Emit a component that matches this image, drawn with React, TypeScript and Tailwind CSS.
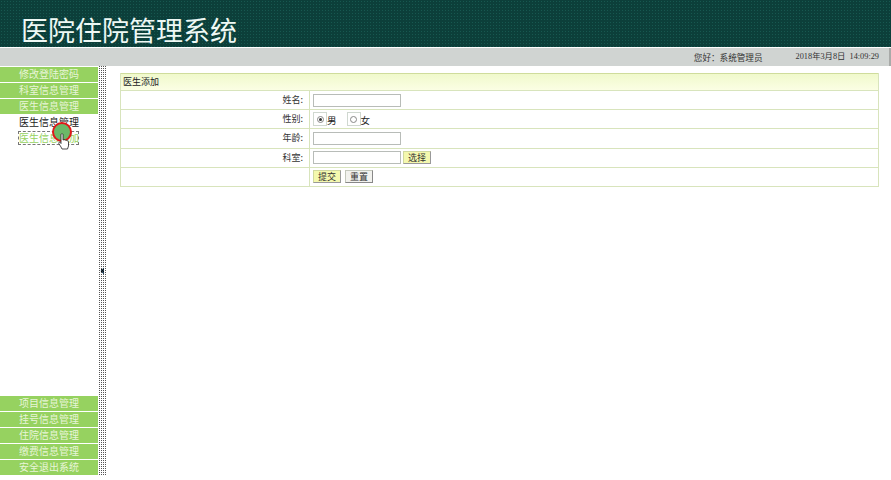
const topMenu = ["修改登陆密码", "科室信息管理", "医生信息管理"];
const bottomMenu = ["项目信息管理", "挂号信息管理", "住院信息管理", "缴费信息管理", "安全退出系统"];

function MenuItem({ label }: { label: string }) {
  return (
    <div className="h-[15px] mb-px bg-[#96d260] text-[#e8f5d8] text-[10px] leading-[14px] text-center">{label}</div>
  );
}

function Row({ label, children }: { label: string; children: React.ReactNode }) {
  return (
    <div className="flex h-[19.2px] border-t border-[#d8e4bc]">
      <div className="w-[189px] pr-[6px] text-right text-[9px] leading-[18px] text-[#333] border-r border-[#d8e4bc]">{label}</div>
      <div className="flex-1 flex items-center pl-[3px] text-[10px] text-[#222]">{children}</div>
    </div>
  );
}

function TextBox() {
  return <div className="w-[88px] h-[13px] bg-white border border-[#b8bcb8]" />;
}

function Radio({ label, checked }: { label: string; checked?: boolean }) {
  return (
    <div className="flex items-center">
      <div className="w-[14px] h-[14px] border border-[#d0d8d0] flex items-center justify-center">
        <div className="w-[7px] h-[7px] rounded-full border border-[#888] flex items-center justify-center">
          {checked && <div className="w-[3px] h-[3px] rounded-full bg-[#333]" />}
        </div>
      </div>
      <span className="mt-[2px] text-[9.500px]">{label}</span>
    </div>
  );
}

function Button({ label, plain }: { label: string; plain?: boolean }) {
  return (
    <div
      className={`w-[28px] h-[13px] border text-[9px] leading-[12px] text-center text-[#333] ${
        plain ? "bg-[#f2f2ee] border-[#c4c8bc] border-b-[#888] border-r-[#888]" : "bg-[#f4f8ae] border-[#d0d8a0] border-b-[#999] border-r-[#999]"
      }`}
    >
      {label}
    </div>
  );
}

export default function App() {
  return (
    <div className="h-[480px] w-[891px] overflow-hidden bg-white flex flex-col font-['Noto_Sans_CJK_SC',sans-serif]">
      <div className="h-[47px] shrink-0 pl-[21px] pt-[13px] bg-[#0c3f3a] bg-[radial-gradient(#175850_1px,transparent_1px)] bg-[length:3px_3px] text-[#eef8f4] text-[27px] font-normal leading-[34px] whitespace-nowrap">
        医院住院管理系统
      </div>
      <div className="h-px shrink-0 bg-white" />
      <div className="h-[18px] shrink-0 bg-[#d0d4d2] border-r-2 border-[#a8aaa8] flex justify-end items-center pr-[10px] text-[8.600px] text-[#333]">
        <span className="mr-[33px]">您好：系统管理员</span>
        <span className="text-[8.300px] font-['Liberation_Serif','Noto_Sans_CJK_SC',serif]">2018年3月8日&nbsp;&nbsp;14:09:29</span>
      </div>
      <div className="flex flex-1 min-h-0">
        <div className="w-[98px] shrink-0 flex flex-col justify-between pt-px pb-[4px]">
          <div className="relative">
            {topMenu.map((m) => (
              <MenuItem key={m} label={m} />
            ))}
            <div className="h-[16px] text-[10px] leading-[14px] text-center text-[#222]">医生信息管理</div>
            <div className="ml-[18px] w-[61px] h-[14px] border border-dashed border-[#777] text-[10px] leading-[12px] text-center text-[#96d260] whitespace-nowrap">医生信息添加</div>
            <div className="absolute left-[52px] top-[55px] w-[20px] h-[20px] rounded-full bg-[#6cb868] border-2 border-[#e01818]" />
            <svg className="absolute left-[58px] top-[66px]" width="12" height="17" viewBox="0 0 12 17">
              <path
                d="M3 1.5c0-1 2-1 2 0V7l1-.3c.8-.2 1.4.2 1.5.6.7-.3 1.4 0 1.6.6.7-.2 1.4.2 1.4 1V13l-1 3H4L3 14 .8 10.500c-.5-1 .8-1.800 1.500-1L3 10.500z"
                fill="#fff"
                stroke="#222"
                strokeWidth="0.8"
              />
            </svg>
          </div>
          <div>
            {bottomMenu.map((m) => (
              <MenuItem key={m} label={m} />
            ))}
          </div>
        </div>
        <div className="relative w-[9px] shrink-0 bg-[conic-gradient(#555_25%,transparent_25%)] bg-[length:2px_2px] mb-[4px]">
          <svg className="absolute left-[1px] top-[201px]" width="7" height="8" viewBox="0 0 7 8">
            <path d="M5 0.500 1.500 4 5 7.500z" fill="#1a3a50" />
            <path d="M2 2 5 5M5 2 2 5" stroke="#111" strokeWidth="1" />
          </svg>
        </div>
        <div className="flex-1 pt-[7px] pl-[13px] pr-[12px]">
          <div className="border-x border-b border-[#d8e4bc]">
            <div className="h-[17px] border-t border-[#cfdc9c] bg-gradient-to-b from-[#f0f9cc] to-[#fbfee4] pl-[2px] text-[9px] leading-[16px] text-[#222]">医生添加</div>
            <Row label="姓名:">
              <TextBox />
            </Row>
            <Row label="性别:">
              <div className="flex gap-[10px]">
                <Radio label="男" checked />
                <Radio label="女" />
              </div>
            </Row>
            <Row label="年龄:">
              <TextBox />
            </Row>
            <Row label="科室:">
              <TextBox />
              <div className="ml-[2px]">
                <Button label="选择" />
              </div>
            </Row>
            <Row label="">
              <div className="flex gap-[4px]">
                <Button label="提交" />
                <Button label="重置" plain />
              </div>
            </Row>
          </div>
        </div>
      </div>
    </div>
  );
}
